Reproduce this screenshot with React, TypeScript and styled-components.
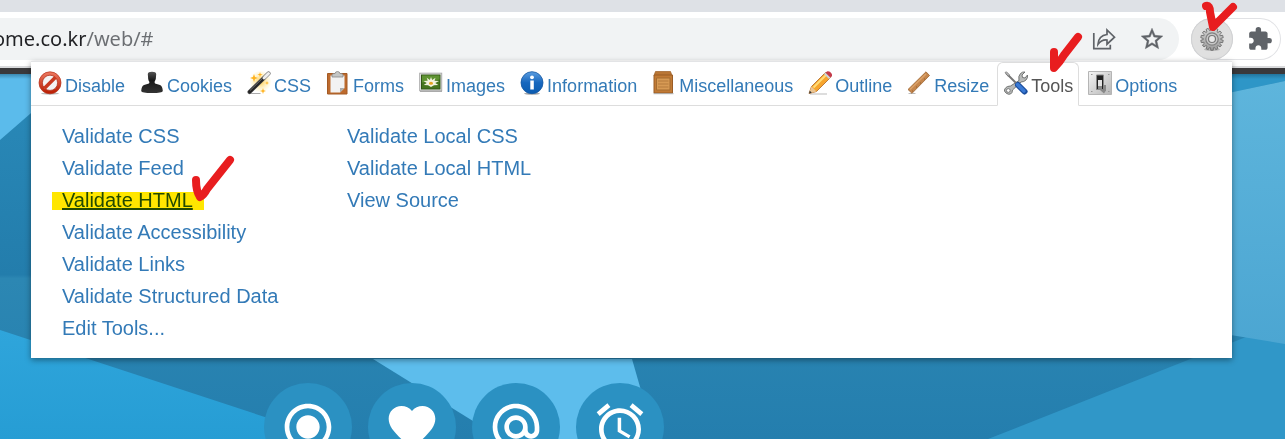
import React from 'react';
import styled, { createGlobalStyle } from 'styled-components';
import {
  MdAccessAlarm,
  MdAlternateEmail,
  MdExtension,
  MdFavorite,
  MdRadioButtonChecked,
  MdStarBorder,
} from 'react-icons/md';

const GlobalStyle = createGlobalStyle`
  *, *::before, *::after { box-sizing: border-box; }
  html, body { margin: 0; }
  body { font-family: "Liberation Sans", Arial, sans-serif; background: #2581b0; }
  button { font: inherit; border: 0; padding: 0; background: none; cursor: pointer; }
`;

const Window = styled.div`
  position: relative;
  display: flex;
  flex-direction: column;
  height: 100vh;
  overflow: hidden;
`;

const TabStrip = styled.div`
  flex: none;
  height: 12px;
  background: #dee1e6;
`;

const Toolbar = styled.header`
  flex: none;
  display: flex;
  gap: 12px;
  padding: 6px 4px 6px 0;
  background: #fff;
  border-bottom: 2px solid #d9dadc;
`;

const Omnibox = styled.div`
  flex: 1;
  min-width: 0;
  display: flex;
  align-items: center;
  gap: 22px;
  height: 42px;
  padding-right: 14px;
  border-radius: 0 21px 21px 0;
  background: #f1f3f4;
  overflow: hidden;
`;

const Address = styled.input`
  flex: 1;
  min-width: 0;
  height: 32px;
  margin: 0 0 0 -7px;
  padding: 0;
  border: 0;
  outline: 0;
  font: 20px/32px "Noto Sans", "Noto Sans CJK KR", sans-serif;
  color: #5f6368;
  background: linear-gradient(to right, #202124 93px, #6b6e72 93px);
  background-clip: text;
  -webkit-background-clip: text;
  -webkit-text-fill-color: transparent;
`;

const ToolButton = styled.button`
  display: flex;
  align-items: center;
  justify-content: center;
  width: 26px;
  height: 26px;
  color: #5f6368;
`;

const Star = styled(MdStarBorder)`
  path:not([fill="none"]) {
    stroke: currentColor;
    stroke-width: 0.4;
  }
  path[fill="none"] {
    stroke: none;
  }
`;

const Extensions = styled.div`
  display: flex;
  align-items: center;
  justify-content: space-between;
  width: 90px;
  height: 42px;
  padding-right: 8px;
  border-radius: 21px;
  box-shadow: inset 0 0 0 1px #e1e2e5;
`;

const GearButton = styled.button`
  position: relative;
  display: flex;
  align-items: center;
  justify-content: center;
  width: 42px;
  height: 42px;
  border-radius: 50%;
  background: #e0e0e0;
  box-shadow: inset 0 0 0 1px #cfd0d2;
`;

const Mark = styled.svg<{ $left: number; $top: number }>`
  position: absolute;
  z-index: 5;
  left: ${(p) => p.$left}px;
  top: ${(p) => p.$top}px;
  fill: none;
  stroke: #e81d1f;
  stroke-width: 8;
  stroke-linecap: round;
  stroke-linejoin: round;
  pointer-events: none;
`;

const Hero = styled.main`
  position: relative;
  flex: 1;
  padding: 309px 0 0 264px;
  border-top: 6px solid #3a393b;
  overflow: hidden;
`;

const Backdrop = styled.svg`
  position: absolute;
  inset: 0;
  width: 100%;
  height: 100%;
`;

const Features = styled.nav`
  position: relative;
  display: flex;
  gap: 16px;
`;

const Feature = styled.a`
  flex: none;
  display: flex;
  align-items: center;
  justify-content: center;
  width: 88px;
  height: 88px;
  border-radius: 50%;
  color: #fff;
  background: #2b91c2;
`;

const Popup = styled.section`
  position: absolute;
  z-index: 2;
  top: 61px;
  left: 31px;
  right: 53px;
  background: #fff;
  border-top: 1px solid #e3e4e6;
  box-shadow: 0 2px 6px rgba(0, 0, 0, 0.4);
`;

const Tabs = styled.div`
  display: flex;
  gap: 2px;
  height: 44px;
  border-bottom: 1px solid #ddd;
`;

const Tab = styled.button<{ $active?: boolean }>`
  position: relative;
  flex: none;
  display: flex;
  align-items: center;
  gap: 3px;
  height: 44px;
  padding: 0 5px 0 6px;
  border: 1px solid ${(p) => (p.$active ? '#ddd' : 'transparent')};
  border-bottom-color: ${(p) => (p.$active ? '#fff' : 'transparent')};
  border-radius: 6px 6px 0 0;
  font-size: 18px;
  line-height: 24px;
  color: ${(p) => (p.$active ? '#555' : '#337ab7')};

  > svg:first-child { flex: none; margin-bottom: 2px; }
  > span { padding-top: 4px; }
`;

const Panel = styled.div`
  display: grid;
  grid-template-columns: repeat(4, 1fr);
  padding: 14px 30px 14px 31px;
`;

const LinkList = styled.ul`
  margin: 0;
  padding: 0;
  list-style: none;
`;

const Item = styled.li`
  position: relative;
  height: 32px;
  white-space: nowrap;
`;

const ItemLink = styled.a<{ $hover?: boolean }>`
  font-size: 20px;
  line-height: 32px;
  color: ${(p) => (p.$hover ? '#23527c' : '#337ab7')};
  text-decoration: ${(p) => (p.$hover ? 'underline' : 'none')};
`;

const Highlight = styled.div`
  position: absolute;
  top: 8px;
  left: -10px;
  width: 152px;
  height: 18px;
  background: #ffe600;
  mix-blend-mode: multiply;
  pointer-events: none;
`;

const Icon = ({ children }: { children: React.ReactNode }) => (
  <svg width="24" height="24" viewBox="0 0 24 24" aria-hidden="true">
    {children}
  </svg>
);

const DisableIcon = () => (
  <Icon>
    <defs>
      <linearGradient id="red" x2="0" y2="1">
        <stop stopColor="#ee7a62" />
        <stop offset="1" stopColor="#b81b00" />
      </linearGradient>
    </defs>
    <ellipse cx="12" cy="22.5" rx="9" ry="1.2" fill="#bbb" />
    <circle cx="12" cy="11.8" r="11" fill="url(#red)" stroke="#b5301a" strokeWidth=".7" />
    <circle cx="12" cy="11.8" r="7.6" fill="#f4f4f4" stroke="#a82a14" strokeWidth=".7" />
    <path d="M6.5 17.2 17.5 6.3" stroke="#c93a20" strokeWidth="3.6" />
  </Icon>
);

const CookiesIcon = () => (
  <Icon>
    <defs>
      <linearGradient id="ink" x2="0" y2="1">
        <stop stopColor="#555" />
        <stop offset=".4" stopColor="#181818" />
        <stop offset="1" stopColor="#333" />
      </linearGradient>
    </defs>
    <path
      d="M7.800 3Q8 .8 12 .8T16.200 3L15.800 8Q15 10 14.500 11L15 12.500 20 14Q22.500 15 22.800 20Q22.500 22 12 22T1.200 20Q1.500 15 4 14L9 12.500 9.500 11Q8.500 10 8.200 8Z"
      fill="url(#ink)"
    />
  </Icon>
);

const WandIcon = () => (
  <Icon>
    <defs>
      <radialGradient id="glow">
        <stop stopColor="#ffc83d" />
        <stop offset="1" stopColor="#fff4c5" stopOpacity=".2" />
      </radialGradient>
    </defs>
    <circle cx="13.500" cy="10.500" r="10.500" fill="url(#glow)" />
    <path
      d="m7 3 1 3 3 1-3 1-1 3-1-3-3-1 3-1ZM13 1l.6 2 2 .6-2 .6-.6 2-.6-2-2-.6 2-.6ZM16 17l.7 2.300 2.300.7-2.300.7L16 23l-.7-2.300L13 20l2.300-.7ZM20 10l.5 1.500 1.500.5-1.500.5L20 14l-.5-1.500L18 12l1.500-.5Z"
      fill="#ffb11b"
    />
    <path d="M2.500 22.500h11" stroke="#aaa" strokeWidth="1" />
    <path d="M2.500 21 21.500 2.500" stroke="#777" strokeWidth="4.200" strokeLinecap="round" />
    <path d="M2.500 21 17 7" stroke="#252525" strokeWidth="3.200" strokeLinecap="round" />
    <path d="m17 7 4.500-4.500" stroke="#eee" strokeWidth="3" strokeLinecap="round" />
    <path d="m3 19.500 13-12.700" stroke="#888" strokeWidth=".8" />
  </Icon>
);

const FormsIcon = () => (
  <Icon>
    <path d="M1.500 2.500h19.500v20.500h-19.500Z" fill="#bd6a2d" stroke="#a35a24" strokeWidth="1" />
    <path d="M4.500 4.500h14V17l-4.500 4.500H4.500Z" fill="#f2f2f2" />
    <path d="m18.500 17-4.500 4.500V17Z" fill="#aaa" />
    <path d="M6 6V3.500Q6.500 2.500 9 2.500 9.300.5 11.500.5t2.500 2Q16.500 2.500 17 3.500V6Z" fill="#c4c6c5" stroke="#888" strokeWidth=".8" />
  </Icon>
);

const ImagesIcon = () => (
  <Icon>
    <rect x=".7" y="2.200" width="22" height="17.500" fill="#eee" stroke="#aaa" />
    <rect x="2.500" y="4" width="18.500" height="14" fill="#45751e" stroke="#315517" />
    <path d="M3 4.500h17.500v4L3 11.500Z" fill="#5f9332" />
    <path
      d="m12 6 1.200 3 3.300-2.200-1 3 4.500.2-3.700 2 3 2-4.300.3-3 1.700-3-1.700-4.300-.3 3-2-3.200-2 4.200-.2-1-3 3.200 2.200Z"
      fill="#f3f2df"
    />
    <ellipse cx="12" cy="12.300" rx="2" ry="1.500" fill="#e3a423" />
    <path d="M1 20.500h22" stroke="#aaa" />
  </Icon>
);

const InfoIcon = () => (
  <Icon>
    <defs>
      <linearGradient id="blue" x2="0" y2="1">
        <stop stopColor="#5b9de0" />
        <stop offset=".5" stopColor="#1767be" />
        <stop offset="1" stopColor="#0b5cb0" />
      </linearGradient>
    </defs>
    <ellipse cx="12" cy="22.600" rx="8" ry="1.200" fill="#aaa" />
    <circle cx="12" cy="11.700" r="11" fill="url(#blue)" stroke="#1558a2" strokeWidth=".8" />
    <circle cx="12" cy="6.300" r="1.900" fill="#fff" />
    <path d="M10.300 9.500h3.500v9h-3.500Z" fill="#fff" />
  </Icon>
);

const CrateIcon = () => (
  <Icon>
    <path d="M3.500.5h15l1.500 4H2Z" fill="#b97635" stroke="#9c5e25" strokeWidth=".7" />
    <path d="M2 4h18.500v18h-18.500Z" fill="#c17a35" stroke="#9a5c25" />
    <path d="M4.500 7h13.500v12h-13.500Z" fill="#d79a54" stroke="#a56c30" />
    <path d="M6 10h10.500M6 13h10.500M6 16h10.500" stroke="#b57b3c" />
    <path d="M1.500 22.700h20" stroke="#aaa" />
  </Icon>
);

const PencilIcon = () => (
  <Icon>
    <path d="M2 23h17" stroke="#bbb" />
    <path d="m1 22.500 2.500-7L17.500 1.500l5 5L8.500 20.500Z" fill="#f7a52d" stroke="#ad6423" strokeWidth=".8" />
    <path d="m5.500 16.500 13-13" stroke="#ffdc77" strokeWidth="2" />
    <path d="m3.500 15.500 5 5L1 22.500Z" fill="#eac594" />
    <path d="m1 22.500.8-2.800 2 2Z" fill="#333" />
    <path d="m16 3 5 5 1.500-1.500-5-5Z" fill="#ccd3da" />
    <path d="m17.500 1.500 2-1.200Q22 0 23.500 2.500T22.500 6.500Z" fill="#c43b4b" />
  </Icon>
);

const RulerIcon = () => (
  <Icon>
    <path d="M1.500 22.500h7" stroke="#bbb" />
    <path d="M1 18.500 19 .8 22.500 4.500 5 22.300Z" fill="#c5864c" stroke="#9c6431" strokeWidth=".8" />
    <path d="m3 18.500 16-15.500" stroke="#dca36b" strokeWidth="1.500" />
    <path d="M5 20h.8M9 16h.8M13 12h.8M17 8h.8" stroke="#7d4a1e" strokeWidth=".8" />
  </Icon>
);

const ToolsIcon = () => (
  <Icon>
    <path
      d="M15 9.500Q14 5 16.500 2.500 18.500.5 21 1l-3 3 .5 2.500 2.500.5L23.500 4Q24 7 22 9t-5 2L8.500 19Q8.500 22 6.500 23T2 22 .8 18 3.500 15.500L6.500 15Z"
      fill="#b8bab9"
      stroke="#686a69"
      strokeWidth=".9"
    />
    <circle cx="4.300" cy="19.500" r="1.900" fill="#fff" stroke="#666" strokeWidth=".8" />
    <path d="m2 2 11 11" stroke="#777" strokeWidth="2" />
    <path d="m1 1.500 1.500-.7 3 3-1.300 1.500Z" fill="#bbb" stroke="#666" strokeWidth=".6" />
    <path d="m14 14 6.500 6.500" stroke="#1a4d9d" strokeWidth="6" strokeLinecap="round" />
    <path d="m13.500 13.500 6.500 6.500" stroke="#3979d4" strokeWidth="3.500" strokeLinecap="round" />
  </Icon>
);

const SwitchIcon = () => (
  <Icon>
    <defs>
      <linearGradient id="plate" x2="1" y2="1">
        <stop stopColor="#f6f6f6" />
        <stop offset="1" stopColor="#b5b5b5" />
      </linearGradient>
    </defs>
    <path d="M.5.5h23v23H.5Z" fill="url(#plate)" stroke="#b5b5b5" />
    <path d="m12 19 4 3.500 2-3V14h-3Z" fill="#888" />
    <path d="M8.500 4h7v14.500h-7Z" fill="#222" stroke="#888" />
    <path d="M10 9h4v9h-4Z" fill="#e2e2e2" />
    <path d="M10 15h4v3h-4Z" fill="#888" />
    <path d="M3 3.500h1.500M20 3.500h1.500M3 20.500h1.500M20 20.500h1.500" stroke="#999" />
  </Icon>
);

const TEETH = 14;
const gearOutline = Array.from({ length: TEETH }, (_, i) =>
  [
    [-0.36, 8.8],
    [-0.24, 11.3],
    [0.24, 11.3],
    [0.36, 8.8],
  ]
    .map(([offset, radius]) => {
      const angle = ((i + offset) / TEETH) * Math.PI * 2;
      return `${(12 + radius * Math.sin(angle)).toFixed(2)},${(12 - radius * Math.cos(angle)).toFixed(2)}`;
    })
    .join(' '),
).join(' ');

const GearIcon = () => (
  <Icon>
    <defs>
      <linearGradient id="steel" x2="0" y2="1">
        <stop stopColor="#d2d2d2" />
        <stop offset="1" stopColor="#9c9c9c" />
      </linearGradient>
    </defs>
    <ellipse cx="12" cy="22.5" rx="8" ry="1.5" fill="#b5b5b5" />
    <polygon points={gearOutline} fill="url(#steel)" stroke="#6c6c6c" strokeWidth=".9" strokeLinejoin="round" />
    <circle cx="12" cy="12" r="6.2" fill="#c9c9c9" stroke="#808080" strokeWidth="1.2" />
    <circle cx="12" cy="12" r="3.500" fill="#e8e8e8" stroke="#777" strokeWidth="1.200" />
  </Icon>
);

const ShareIcon = () => (
  <svg width="26" height="26" viewBox="0 0 26 26" fill="none" stroke="currentColor" strokeWidth="1.700" aria-hidden="true">
    <path d="M2.800 7v15.700h16.500v-4" />
    <path d="M7 18.300Q7.600 9.500 16 8.500V4l7.500 7.200-7.500 7V14Q10.500 13.500 7 18.300Z" />
  </svg>
);

const tabs = [
  { label: 'Disable', Glyph: DisableIcon },
  { label: 'Cookies', Glyph: CookiesIcon },
  { label: 'CSS', Glyph: WandIcon },
  { label: 'Forms', Glyph: FormsIcon },
  { label: 'Images', Glyph: ImagesIcon },
  { label: 'Information', Glyph: InfoIcon },
  { label: 'Miscellaneous', Glyph: CrateIcon },
  { label: 'Outline', Glyph: PencilIcon },
  { label: 'Resize', Glyph: RulerIcon },
  { label: 'Tools', Glyph: ToolsIcon },
  { label: 'Options', Glyph: SwitchIcon },
];

const columns = [
  [
    'Validate CSS',
    'Validate Feed',
    'Validate HTML',
    'Validate Accessibility',
    'Validate Links',
    'Validate Structured Data',
    'Edit Tools...',
  ],
  ['Validate Local CSS', 'Validate Local HTML', 'View Source'],
];

const features = [
  { label: 'Record', Glyph: MdRadioButtonChecked },
  { label: 'Favorites', Glyph: MdFavorite },
  { label: 'Email', Glyph: MdAlternateEmail },
  { label: 'Alarm', Glyph: MdAccessAlarm },
];

const HeroBackdrop = () => (
  <Backdrop viewBox="0 74 1285 365" preserveAspectRatio="xMidYMin slice" aria-hidden="true">
    <defs>
      <linearGradient id="deep" x2="0" y2="1">
        <stop stopColor="#2a8ab9" />
        <stop offset=".55" stopColor="#237dac" />
        <stop offset=".56" stopColor="#2c87b3" />
        <stop offset="1" stopColor="#247eae" />
      </linearGradient>
      <linearGradient id="sky" x2="0" y2="1">
        <stop stopColor="#5eb5dc" />
        <stop offset="1" stopColor="#4ca6d2" />
      </linearGradient>
      <linearGradient id="lower" x2="0" y2="1">
        <stop stopColor="#2fa5db" />
        <stop offset="1" stopColor="#269dd4" />
      </linearGradient>
      <linearGradient id="shade" x2="0" y2="1">
        <stop stopColor="#144b68" stopOpacity=".45" />
        <stop offset="1" stopColor="#144b68" stopOpacity="0" />
      </linearGradient>
    </defs>
    <path d="M0 74h1285v365H0Z" fill="url(#deep)" />
    <path d="M0 74h76L0 140Z" fill="#5bbbeb" />
    <path d="m0 330 332 109H0Z" fill="url(#lower)" />
    <path d="M373 359h259l23 80H502Z" fill="#5dbdec" />
    <path d="M1285 318v121H988l258-102Z" fill="#3097c8" />
    <path d="M1200 74h85v7l-85 18Z" fill="#2e96c7" />
    <path d="m1200 99 85-18v263l-85-14Z" fill="url(#sky)" />
    <path d="M0 74h1285v5H0Z" fill="url(#shade)" />
  </Backdrop>
);

export default function App() {
  return (
    <Window>
      <GlobalStyle />
      <TabStrip />
      <Toolbar>
        <Omnibox>
          <Address aria-label="Address" defaultValue="ome.co.kr/web/#" spellCheck={false} />
          <ToolButton aria-label="Share this page">
            <ShareIcon />
          </ToolButton>
          <ToolButton aria-label="Bookmark this page">
            <Star size={26} />
          </ToolButton>
        </Omnibox>
        <Extensions>
          <GearButton aria-label="Web Developer">
            <GearIcon />
            <Mark $left={8} $top={-18} width="44" height="40">
              <path d="M7 6Q11 5 11 12L14 27 34 7" />
            </Mark>
          </GearButton>
          <ToolButton aria-label="Extensions">
            <MdExtension size={26} />
          </ToolButton>
        </Extensions>
      </Toolbar>

      <Hero>
        <HeroBackdrop />
        <Features aria-label="Features">
          {features.map(({ label, Glyph }) => (
            <Feature key={label} href="#" aria-label={label}>
              <Glyph size={56} />
            </Feature>
          ))}
        </Features>
      </Hero>

      <Popup aria-label="Web Developer">
        <Tabs role="tablist">
          {tabs.map(({ label, Glyph }) => {
            const active = label === 'Tools';
            return (
              <Tab key={label} role="tab" aria-selected={active} $active={active}>
                <Glyph />
                <span>{label}</span>
                {active && (
                  <Mark $left={48} $top={-34} width="40" height="48">
                    <path d="M8 23 8 39 Q14 33 18 26L32 8" />
                  </Mark>
                )}
              </Tab>
            );
          })}
        </Tabs>
        <Panel role="tabpanel" aria-label="Tools">
          {columns.map((items) => (
            <LinkList key={items[0]}>
              {items.map((item) => {
                const marked = item === 'Validate HTML';
                return (
                  <Item key={item}>
                    <ItemLink href="#" $hover={marked}>
                      {item}
                    </ItemLink>
                    {marked && (
                      <>
                        <Highlight />
                        <Mark $left={126} $top={-32} width="50" height="54">
                          <path d="M8 28Q8 39 12 45 16 43 19 37L42 8" />
                        </Mark>
                      </>
                    )}
                  </Item>
                );
              })}
            </LinkList>
          ))}
        </Panel>
      </Popup>
    </Window>
  );
}
